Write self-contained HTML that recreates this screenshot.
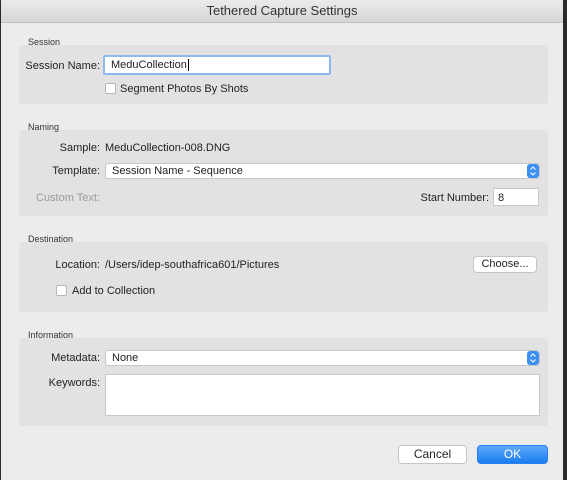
<html><head><style>
body{margin:0;width:567px;height:480px;background:#2a2a2a;font-family:"Liberation Sans",sans-serif;font-size:11px;color:#222;position:relative;overflow:hidden}
.win{position:absolute;left:1px;top:0;width:562px;height:480px;background:#ececec}
.title{position:absolute;left:0;top:0;width:562px;height:22px;background:linear-gradient(#ebebeb,#d6d6d6);border-bottom:1px solid #c2c2c2;text-align:center;line-height:22px;font-size:13px;color:#333}
.a{position:absolute;white-space:nowrap}
.lbl{font-size:9px;color:#333}
.grp{position:absolute;left:18px;width:529px;background:#e2e2e2;border-radius:4px}
.rt{position:absolute;text-align:right;white-space:nowrap}
.in{position:absolute;background:#fff;border:1px solid #c8c8c8;box-sizing:border-box}
.pop{position:absolute;background:#fff;border:1px solid #c8c8c8;border-radius:3px;box-sizing:border-box;padding-left:6px;line-height:14px}
.pop svg{position:absolute;right:0;top:0}
.cb{position:absolute;width:11px;height:11px;background:#fff;border:1px solid #b5b5b5;border-radius:2px;box-sizing:border-box}
.btn{position:absolute;background:#fff;border:1px solid #c4c4c4;border-radius:4px;text-align:center;box-sizing:border-box}
</style></head><body><div class="win">
<div class="title">Tethered Capture Settings</div>
<div class="grp" style="top:45px;height:59px"></div>
<div class="grp" style="top:130px;height:86px"></div>
<div class="grp" style="top:242px;height:70px"></div>
<div class="grp" style="top:338px;height:88px"></div>
<div class="a lbl" style="left:27px;top:37px">Session</div>
<div class="rt" style="right:463px;top:60px">Session Name:</div>
<div class="in" style="left:102px;top:55px;width:228px;height:20px;border:2px solid #8fb8ec;border-radius:2px;padding:2px 6px;line-height:13px">MeduCollection<span style="border-left:1px solid #000;margin-left:1px"></span></div>
<div class="cb" style="left:104px;top:83px"></div>
<div class="a" style="left:119px;top:83px">Segment Photos By Shots</div>

<div class="a lbl" style="left:27px;top:122px">Naming</div>
<div class="rt" style="right:463px;top:142px">Sample:</div>
<div class="a" style="left:104px;top:142px">MeduCollection-008.DNG</div>
<div class="rt" style="right:463px;top:165px">Template:</div>
<div class="pop" style="left:104px;top:163px;width:435px;height:16px">Session Name - Sequence<svg width="12" height="14"><rect width="12" height="14" rx="3" fill="#3b8ff5"/><path d="M3.5 5.5L6 3L8.5 5.5M3.5 8.5L6 11L8.5 8.5" stroke="#fff" fill="none" stroke-width="1.1"/></svg></div>
<div class="rt" style="right:463px;top:192px;color:#9a9a9a">Custom Text:</div>
<div class="rt" style="right:74px;top:192px">Start Number:</div>
<div class="in" style="left:492px;top:188px;width:46px;height:18px;padding:3px 4px">8</div>

<div class="a lbl" style="left:27px;top:234px">Destination</div>
<div class="rt" style="right:463px;top:259px">Location:</div>
<div class="a" style="left:104px;top:259px">/Users/idep-southafrica601/Pictures</div>
<div class="btn" style="left:472px;top:256px;width:64px;height:17px;line-height:15px">Choose...</div>
<div class="cb" style="left:55px;top:285px"></div>
<div class="a" style="left:71px;top:285px">Add to Collection</div>

<div class="a lbl" style="left:27px;top:330px">Information</div>
<div class="rt" style="right:463px;top:352px">Metadata:</div>
<div class="pop" style="left:104px;top:350px;width:435px;height:16px">None<svg width="12" height="14"><rect width="12" height="14" rx="3" fill="#3b8ff5"/><path d="M3.5 5.5L6 3L8.5 5.5M3.5 8.5L6 11L8.5 8.5" stroke="#fff" fill="none" stroke-width="1.1"/></svg></div>
<div class="rt" style="right:463px;top:377px">Keywords:</div>
<div class="in" style="left:104px;top:374px;width:435px;height:42px"></div>

<div class="btn" style="left:397px;top:445px;width:69px;height:19px;line-height:17px;font-size:12px">Cancel</div>
<div class="btn" style="left:476px;top:445px;width:71px;height:19px;line-height:17px;font-size:12px;background:linear-gradient(#5fa9f8,#1a7cf2);border-color:#2a80ef;color:#fff">OK</div>
</div></body></html>
